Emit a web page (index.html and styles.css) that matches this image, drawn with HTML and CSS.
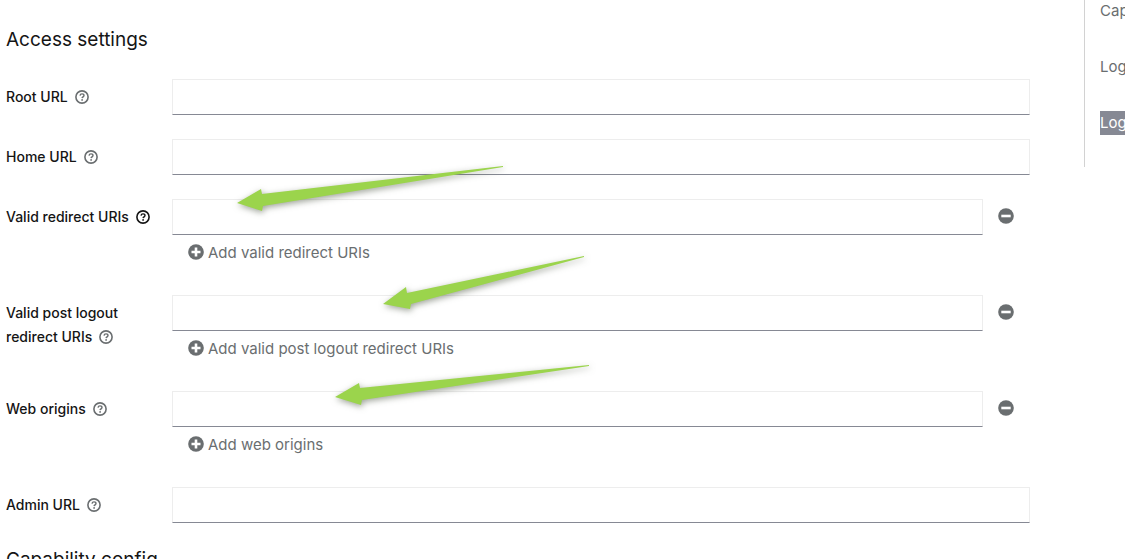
FILE: index.html
```html
<!DOCTYPE html>
<html lang="en">
<head>
<meta charset="utf-8">
<title>Client settings</title>
<link rel="stylesheet" href="styles.css">
</head>
<body>
<svg class="sprite" aria-hidden="true">
  <symbol id="help" viewBox="0 0 14 14">
    <circle cx="7" cy="7" r="6.1" fill="none" stroke="currentColor" stroke-width="1.6"/>
    <path d="M5 5.6C5.2 4.4 6 3.9 7 3.9c1.200 0 2 .7 2 1.600 0 1.300-1.800 1.300-1.900 2.600" fill="none" stroke="currentColor" stroke-width="1.400"/>
    <circle cx="7.100" cy="9.900" r=".9" fill="currentColor"/>
  </symbol>
  <symbol id="plus" viewBox="0 0 16 16">
    <circle cx="8" cy="8" r="7.800" fill="currentColor"/>
    <path d="M8 3.500v9M3.500 8h9" stroke="#fff" stroke-width="2.600"/>
  </symbol>
  <symbol id="minus" viewBox="0 0 16 16">
    <circle cx="8" cy="8" r="7.800" fill="currentColor"/>
    <path d="M3.300 8h9.400" stroke="#fff" stroke-width="2.600"/>
  </symbol>
</svg>
<div class="page">
  <main class="content">
    <h2 class="title">Access settings</h2>
    <form class="form">
      <div class="row">
        <div class="label"><label for="root">Root URL</label><button type="button" class="help" aria-label="Help for Root URL"><svg><use href="#help"/></svg></button></div>
        <input class="text" type="text" id="root">
      </div>
      <div class="row">
        <div class="label"><label for="home">Home URL</label><button type="button" class="help" aria-label="Help for Home URL"><svg><use href="#help"/></svg></button></div>
        <input class="text" type="text" id="home">
      </div>
      <div class="row">
        <div class="label"><label for="redirect">Valid redirect URIs</label><button type="button" class="help help-active" aria-label="Help for Valid redirect URIs"><svg><use href="#help"/></svg></button></div>
        <div class="multi">
          <div class="entry"><input class="text" type="text" id="redirect"><button type="button" class="remove" aria-label="Remove"><svg><use href="#minus"/></svg></button></div>
          <button type="button" class="add"><svg><use href="#plus"/></svg>Add valid redirect URIs</button>
          <svg class="arrow" aria-hidden="true"><path d="M65 4 89-10 90-5 331-33V-32L91 7 90 12Z"/></svg>
        </div>
      </div>
      <div class="row">
        <div class="label"><label for="logout">Valid post logout redirect URIs</label><button type="button" class="help" aria-label="Help for Valid post logout redirect URIs"><svg><use href="#help"/></svg></button></div>
        <div class="multi">
          <div class="entry"><input class="text" type="text" id="logout"><button type="button" class="remove" aria-label="Remove"><svg><use href="#minus"/></svg></button></div>
          <button type="button" class="add"><svg><use href="#plus"/></svg>Add valid post logout redirect URIs</button>
          <svg class="arrow" aria-hidden="true"><path d="M211 9 234-8 235-2 412-39V-38L239 9 238 14Z"/></svg>
        </div>
      </div>
      <div class="row">
        <div class="label"><label for="origins">Web origins</label><button type="button" class="help" aria-label="Help for Web origins"><svg><use href="#help"/></svg></button></div>
        <div class="multi">
          <div class="entry"><input class="text" type="text" id="origins"><button type="button" class="remove" aria-label="Remove"><svg><use href="#minus"/></svg></button></div>
          <button type="button" class="add"><svg><use href="#plus"/></svg>Add web origins</button>
          <svg class="arrow" aria-hidden="true"><path d="M163 6 187-8 188-3 417-26V-25L190 9 189 14Z"/></svg>
        </div>
      </div>
      <div class="row">
        <div class="label"><label for="admin">Admin URL</label><button type="button" class="help" aria-label="Help for Admin URL"><svg><use href="#help"/></svg></button></div>
        <input class="text" type="text" id="admin">
      </div>
    </form>
    <h2 class="title">Capability config</h2>
  </main>
  <nav class="jump" aria-label="Jump to section">
    <a href="#capability">Capability config</a>
    <a href="#login">Login settings</a>
    <a href="#logout"><mark>Logout settings</mark></a>
  </nav>
</div>
</body>
</html>
```
FILE: styles.css
```css
* { box-sizing: border-box; }
html, body { height: 100%; }
body {
  margin: 0;
  overflow: hidden;
  background: #fff;
  color: #151515;
  font-family: Inter, "Liberation Sans", sans-serif;
}
button {
  border: 0;
  padding: 0;
  background: none;
  color: #6a6e70;
  font: inherit;
  cursor: pointer;
}
.sprite { position: absolute; width: 0; height: 0; }
.page { display: flex; align-items: flex-start; gap: 54px; height: 100%; }
.content { flex: 1; min-width: 0; padding: 27px 0 0 6px; }
.title { margin: 0; font-size: 19px; line-height: 26px; font-weight: 400; }
.form { display: grid; gap: 24px; margin: 26px 0 24px; }
.row { display: grid; grid-template-columns: 150px 1fr; column-gap: 16px; }
.label { padding-top: 6px; font-size: 14px; line-height: 24px; font-weight: 500; }
.help { margin-left: 7px; vertical-align: -2px; line-height: 14px; }
.help svg { display: block; width: 14px; height: 14px; }
.help.help-active { color: #151515; }
.text {
  width: 100%;
  height: 36px;
  padding: 0 8px;
  border: 1px solid #ededed;
  border-bottom-color: #868994;
  background: #fff;
  font: inherit;
}
.multi { position: relative; }
.entry { display: grid; grid-template-columns: 1fr 47px; }
.remove { display: grid; place-items: center; padding-bottom: 2px; padding-right: 1px; }
.remove svg, .add svg { width: 16px; height: 16px; }
.add {
  display: flex;
  align-items: center;
  gap: 4px;
  height: 36px;
  padding: 0 0 2px 16px;
  font-size: 15px;
  font-weight: 400;
}
.arrow {
  position: absolute;
  top: 0;
  left: 0;
  width: 1px;
  height: 1px;
  overflow: visible;
  z-index: 1;
  pointer-events: none;
  fill: #9bd44c;
  filter: drop-shadow(1px 2px 3px rgba(60, 70, 50, .5));
}
.jump {
  display: flex;
  flex-direction: column;
  gap: 32px;
  width: 41px;
  margin-top: -1px;
  padding: 0 0 32px 15px;
  border-left: 1px solid #d2d2d2;
  overflow: hidden;
  font-size: 15px;
  line-height: 24px;
  font-weight: 400;
  white-space: nowrap;
}
.jump a { color: #6a6e70; text-decoration: none; }
.jump mark { display: inline-block; background: #868994; color: #fff; }
```
